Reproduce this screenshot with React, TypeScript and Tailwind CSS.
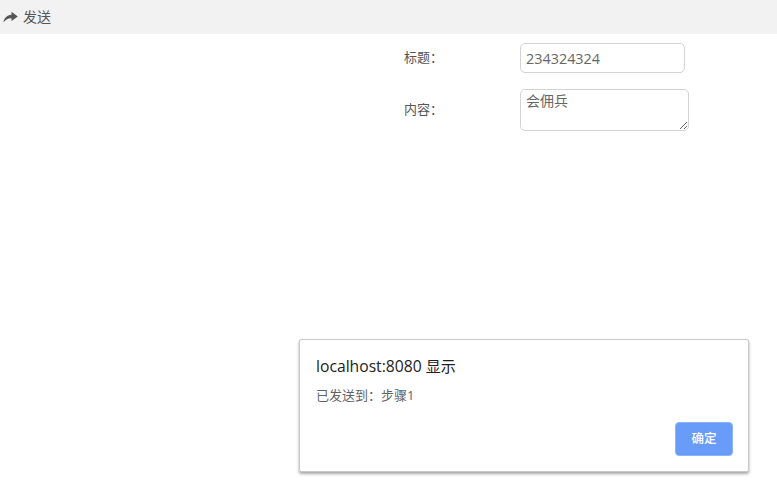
export default function App() {
  return (
    <div className="relative h-[484px] w-[777px] overflow-hidden bg-white font-['Open_Sans','Noto_Sans_CJK_SC',sans-serif] text-[#555]">
      <div className="flex h-[34px] items-center bg-[#f2f2f2] pl-[3px] text-[14px] text-[#555]">
        <svg width="15" height="12" viewBox="0 0 15 12" className="mr-[5px]">
          <path d="M0.5 11.5C1 7.5 3.8 4.2 8.5 3.8V0.8L14.8 5.6 8.5 10V7.2C5 7 2.4 8.6 0.5 11.5Z" fill="#555" />
        </svg>
        <span className="-mt-[2px]">发送</span>
      </div>
      <div className="flex flex-col gap-4 pt-[9px] pl-[404px]">
        <div className="flex h-[30px] items-center">
          <label className="w-[116px] text-[13px]">{"标题\uFF1A"}</label>
          <input
            readOnly
            value="234324324"
            className="h-[30px] w-[165px] rounded-[5px] border border-[#d3d3d3] px-[5px] text-[14.4px] text-[#666] outline-none"
          />
        </div>
        <div className="flex h-[42px] items-center">
          <label className="w-[116px] text-[13px]">{"内容\uFF1A"}</label>
          <textarea
            readOnly
            value="会佣兵"
            className="h-[42px] w-[169px] rounded-[5px] border border-[#d3d3d3] px-[5px] py-0 text-[14px] leading-[21px] text-[#666] outline-none"
          />
        </div>
      </div>
      <div className="absolute top-[339px] left-[299px] flex h-[133px] w-[450px] flex-col rounded-[2px] border border-[#c8c8c8] bg-white pt-[15px] pr-[15px] pb-[15px] pl-4 shadow-[0_2px_3px_rgba(0,0,0,0.35)]">
        <div className="text-[15.7px] leading-[22px] text-[#202124]">
          localhost:8080 <span className="text-[15px]">显示</span>
        </div>
        <div className="mt-[9px] text-[13px] leading-[18px] text-[#5f6368]">{"已发送到\uFF1A步骤1"}</div>
        <div className="mt-auto flex justify-end">
          <button className="h-[34px] w-[58px] rounded-[4px] border border-[#8ab4f8] bg-[#689cf8] text-[12.5px] font-medium text-white">确定</button>
        </div>
      </div>
    </div>
  );
}
